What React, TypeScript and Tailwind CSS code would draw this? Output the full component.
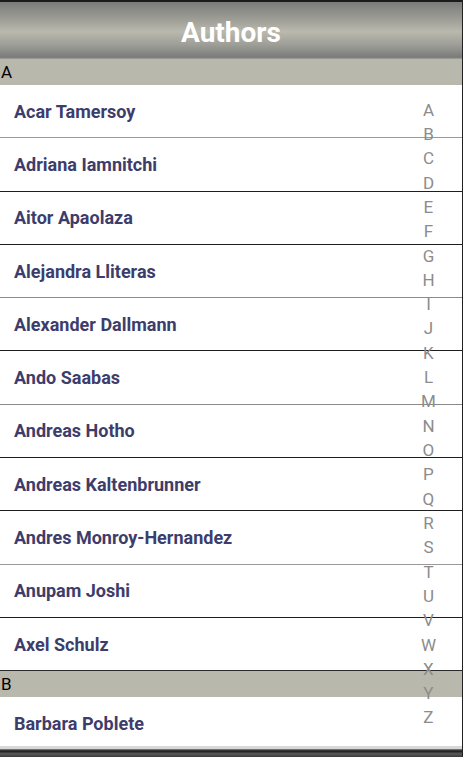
const sections = [
  {
    letter: 'A',
    names: [
      'Acar Tamersoy',
      'Adriana Iamnitchi',
      'Aitor Apaolaza',
      'Alejandra Lliteras',
      'Alexander Dallmann',
      'Ando Saabas',
      'Andreas Hotho',
      'Andreas Kaltenbrunner',
      'Andres Monroy-Hernandez',
      'Anupam Joshi',
      'Axel Schulz',
    ],
  },
  { letter: 'B', names: ['Barbara Poblete'] },
];

// separators look alternately grey / black in the reference
const lineColors = [
  'border-[#9a9a9a]',
  'border-[#1e1e1e]',
  'border-[#1e1e1e]',
  'border-[#8a8a8a]',
  'border-[#1e1e1e]',
  'border-[#8a8a8a]',
  'border-[#1e1e1e]',
  'border-[#1e1e1e]',
  'border-[#9a9a9a]',
  'border-[#1e1e1e]',
  'border-[#2a2a2a]',
  'border-[#cfcfcf]',
];

const index = 'ABCDEFGHIJKLMNOPQRSTUVWXYZ'.split('');

export default function App() {
  let row = 0;

  return (
    <div className="relative flex h-[757px] w-[463px] flex-col overflow-hidden border-r border-[#222] bg-white font-['Roboto',sans-serif]">
      <header className="flex h-[59px] shrink-0 items-center justify-center border-t-2 border-[#1c1c1c] bg-[linear-gradient(to_bottom,#7b7b7b_0%,#a3a39b_35%,#b9b9ad_52%,#9e9e98_75%,#7a7a7a_97%,#a5a59d_100%)] pt-[4px]">
        <h1 className="text-[28px] font-bold leading-none text-white">Authors</h1>
      </header>

      <div className="flex-1 overflow-hidden">
        {sections.map((s) => (
          <div key={s.letter}>
            <div className="flex h-[26px] items-center bg-[#b8b8ac] pl-[1px] text-[17px] leading-none text-black">
              {s.letter}
            </div>
            {s.names.map((name) => {
              const c = lineColors[row++];
              return (
                <div
                  key={name}
                  className={`flex h-[53.3px] items-center border-b pl-[14px] text-[18px] font-bold text-[#3d3d6b] ${c}`}
                >
                  {name}
                </div>
              );
            })}
          </div>
        ))}
      </div>

      <div className="h-[11px] shrink-0 border-t-[3px] border-[#d8d8d8] bg-[linear-gradient(to_bottom,#8c8c8c_0%,#1a1a1a_25%,#5a5a5a_60%,#3a3a3a_100%)]" />

      <ul className="absolute top-[98px] right-[26px] flex flex-col items-center text-[17px] leading-none text-[#8c8c8c]">
        {index.map((l) => (
          <li key={l} className="flex h-[24.32px] items-center">
            {l}
          </li>
        ))}
      </ul>
    </div>
  );
}
